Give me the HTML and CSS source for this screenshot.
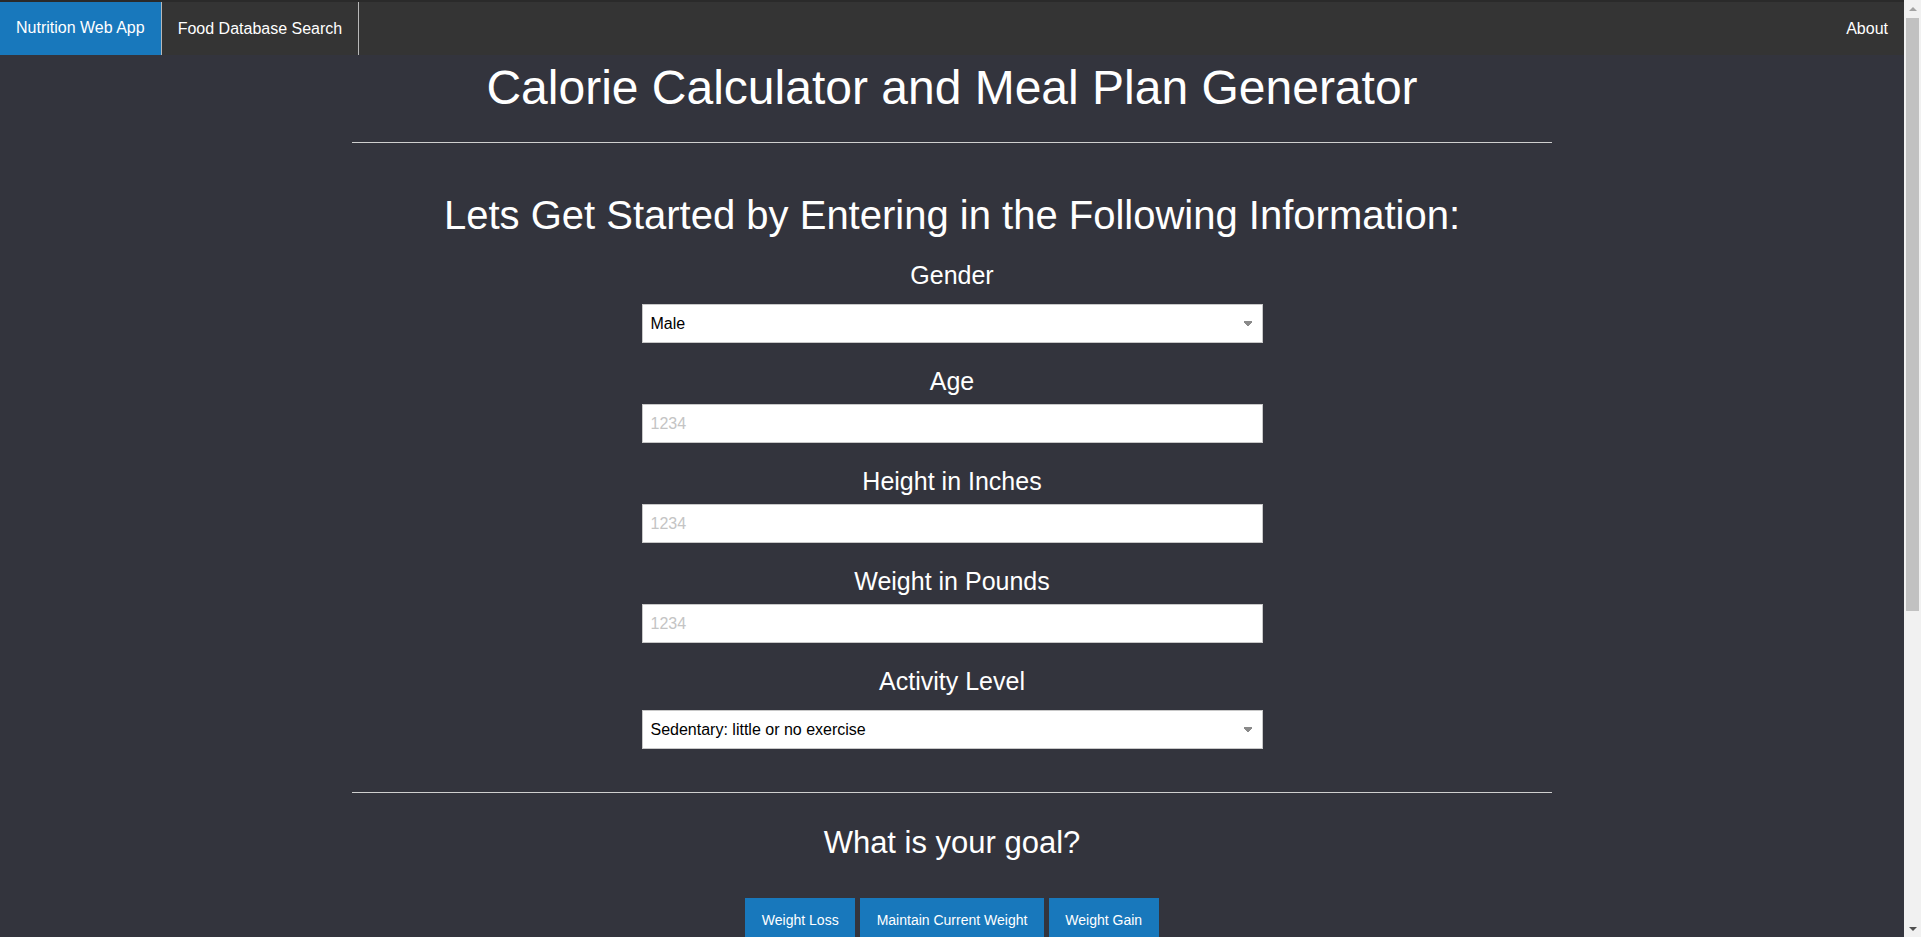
FILE: index.html
```html
<!DOCTYPE html>
<html lang="en">
<head>
<meta charset="utf-8">
<title>Nutrition Web App</title>
<link rel="stylesheet" href="styles.css">
</head>
<body>
<div class="page">
<nav class="topnav">
  <div class="nav-left">
    <a class="nav-item nav-brand" href="#">Nutrition Web App</a>
    <a class="nav-item" href="#">Food Database Search</a>
  </div>
  <div class="nav-right">
    <a class="nav-item nav-about" href="#">About</a>
  </div>
</nav>
<main class="container">
  <h1 class="page-title">Calorie Calculator and Meal Plan Generator</h1>
  <hr class="rule rule-top">
  <h2 class="intro">Lets Get Started by Entering in the Following Information:</h2>
  <form class="info-form">
    <div class="field">
      <label class="field-label" for="gender">Gender</label>
      <select class="control control-select" id="gender">
        <option>Male</option>
        <option>Female</option>
      </select>
    </div>
    <div class="field">
      <label class="field-label" for="age">Age</label>
      <input class="control control-input" id="age" type="text" placeholder="1234">
    </div>
    <div class="field">
      <label class="field-label" for="height">Height in Inches</label>
      <input class="control control-input" id="height" type="text" placeholder="1234">
    </div>
    <div class="field">
      <label class="field-label" for="weight">Weight in Pounds</label>
      <input class="control control-input" id="weight" type="text" placeholder="1234">
    </div>
    <div class="field">
      <label class="field-label" for="activity">Activity Level</label>
      <select class="control control-select" id="activity">
        <option>Sedentary: little or no exercise</option>
        <option>Lightly active</option>
        <option>Moderately active</option>
        <option>Very active</option>
      </select>
    </div>
  </form>
  <hr class="rule rule-bottom">
  <h3 class="goal-title">What is your goal?</h3>
  <div class="goal-buttons">
    <button class="goal-btn" type="button">Weight Loss</button>
    <button class="goal-btn" type="button">Maintain Current Weight</button>
    <button class="goal-btn" type="button">Weight Gain</button>
  </div>
</main>
</div>
<div class="scrollbar" aria-hidden="true">
  <div class="sb-btn"><span class="sb-arrow-up"></span></div>
  <div class="sb-track">
    <div class="sb-thumb"></div>
  </div>
  <div class="sb-btn"><span class="sb-arrow-down"></span></div>
</div>
</body>
</html>
```
FILE: styles.css
```css
html, body {
  margin: 0;
  padding: 0;
  height: 100%;
  overflow: hidden;
}
body {
  display: flex;
  background: #33343d;
  color: #ffffff;
  font-family: "Liberation Sans", Arial, Helvetica, sans-serif;
}
.page {
  flex: 1;
  min-width: 0;
  height: 100vh;
  overflow: hidden;
}
/* browser scrollbar rail */
.scrollbar {
  width: 17px;
  flex: 0 0 17px;
  height: 100vh;
  display: flex;
  flex-direction: column;
  background: #f1f1f1;
}
.sb-btn {
  height: 17px;
  flex: 0 0 17px;
  display: flex;
  align-items: center;
  justify-content: center;
}
.sb-arrow-up {
  width: 0;
  height: 0;
  border-left: 4px solid transparent;
  border-right: 4px solid transparent;
  border-bottom: 4px solid #a3a3a3;
}
.sb-arrow-down {
  width: 0;
  height: 0;
  border-left: 4px solid transparent;
  border-right: 4px solid transparent;
  border-top: 4px solid #505050;
}
.sb-track {
  flex: 1;
  padding: 1px 2px 0;
}
.sb-thumb {
  height: 593px;
  background: #c1c1c1;
}
.topnav {
  display: flex;
  justify-content: space-between;
  align-items: stretch;
  height: 53px;
  background: #343434;
  border-top: 2px solid #2a2a2a;
}
.nav-left, .nav-right {
  display: flex;
  align-items: stretch;
}
.nav-item {
  display: flex;
  align-items: center;
  padding: 0 16px;
  color: #ffffff;
  text-decoration: none;
  font-size: 16px;
}
.nav-left .nav-item {
  border-right: 1px solid #b8b8b8;
}
.nav-brand {
  background: #1878bc;
  padding-bottom: 1px;
}
.nav-about {
  padding-right: 16px;
}
.container {
  width: 1200px;
  margin: 0 auto;
  padding: 6px 0 482px;
  text-align: center;
}
.page-title {
  margin: 0;
  font-size: 48px;
  line-height: 53px;
  font-weight: normal;
}
.rule {
  border: 0;
  border-top: 1px solid #cfcfcf;
  height: 0;
  margin: 0;
}
.rule-top {
  margin-top: 28px;
}
.intro {
  margin: 50px 0 0;
  font-size: 40px;
  line-height: 44px;
  font-weight: normal;
}
.info-form {
  display: flex;
  flex-direction: column;
  align-items: center;
}
.field {
  display: flex;
  flex-direction: column;
  align-items: center;
  width: 621px;
  margin-top: 23px;
}
.field-label {
  display: block;
  font-size: 25px;
  line-height: 30px;
}
.control {
  box-sizing: border-box;
  width: 621px;
  height: 39px;
  border: 1px solid #c8c8c8;
  background-color: #ffffff;
  color: #000000;
  font-family: "Liberation Sans", Arial, Helvetica, sans-serif;
  font-size: 16px;
  padding: 0 8px;
  border-radius: 0;
  outline: none;
  text-align: left;
}
.control-input {
  margin-top: 8px;
}
.control-input::placeholder {
  color: #c4c4c4;
}
.control-select {
  margin-top: 14px;
  -webkit-appearance: none;
  appearance: none;
  background-image:
    linear-gradient(45deg, transparent 50%, #8a8a8a 50%),
    linear-gradient(135deg, #8a8a8a 50%, transparent 50%);
  background-position: right 14px top 16px, right 10px top 16px;
  background-size: 4px 7px, 4px 7px;
  background-repeat: no-repeat;
}
.rule-bottom {
  width: 1200px;
  margin-top: 43px;
}
.goal-title {
  margin: 32px 0 0;
  font-size: 31px;
  line-height: 36px;
  font-weight: normal;
}
.goal-buttons {
  display: flex;
  justify-content: center;
  gap: 5px;
  margin-top: 37px;
}
.goal-btn {
  background: #1878bc;
  color: #ffffff;
  border: 0;
  border-radius: 0;
  font-family: "Liberation Sans", Arial, Helvetica, sans-serif;
  font-size: 14px;
  line-height: 20px;
  padding: 12px 16.5px;
  cursor: pointer;
}
```
